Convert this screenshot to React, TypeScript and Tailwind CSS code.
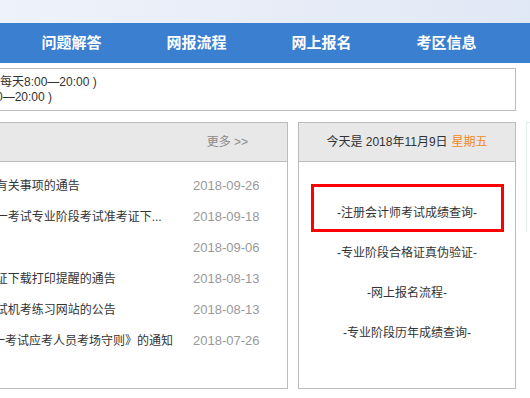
import React from 'react'

const navItems = ['首页', '问题解答', '网报流程', '网上报名', '考区信息', '联系我们']

const notices = [
  { title: '关于2018年注会考试报名工作有关事项的通告', date: '2018-09-26' },
  { title: '关于2018年注册会计师全国统一考试专业阶段考试准考证下...', date: '2018-09-18' },
  { title: '2018年考试报名简章', date: '2018-09-06' },
  { title: '关于2018年全国统一考试准考证下载打印提醒的通告', date: '2018-08-13' },
  { title: '关于开通2018年注册会计师考试机考练习网站的公告', date: '2018-08-13' },
  { title: '关于印发《注册会计师全国统一考试应考人员考场守则》的通知', date: '2018-07-26' },
]

const quickLinks = [
  '-注册会计师考试成绩查询-',
  '-专业阶段合格证真伪验证-',
  '-网上报名流程-',
  '-专业阶段历年成绩查询-',
]

export default function App() {
  return (
    <div
      className="w-[530px] h-[398px] overflow-hidden bg-white text-[12px] text-[#333]"
      style={{ fontFamily: '"Liberation Sans", "Noto Sans CJK SC", sans-serif' }}
    >
      {/* top band */}
      <div className="h-[23px] bg-gradient-to-r from-[#eef2fa] to-[#e1e8f5]" />

      {/* nav */}
      <div className="h-[40px] bg-[#3b80d0] overflow-hidden">
        <div className="flex h-full -ml-[116px]">
          {navItems.map((item) => (
            <div
              key={item}
              className="w-[125px] shrink-0 flex items-center justify-center text-white font-bold text-[15px]"
            >
              {item}
            </div>
          ))}
        </div>
      </div>

      {/* notice box */}
      <div className="mt-[5px] -ml-[130px] w-[646px] h-[43px] border border-[#bcbcbc] pl-[9px] pt-[6px] leading-[15px] whitespace-nowrap">
        <div>（报名期间咨询时间：每天8:00—20:00 )</div>
        <div>（其他时间：周一 9:00—20:00 )</div>
      </div>

      {/* panels */}
      <div className="mt-[11px] flex h-[267px]">
        {/* news list */}
        <div className="-ml-[175px] w-[463px] shrink-0 border border-[#bcbcbc] flex flex-col">
          <div className="h-[39px] bg-[#e8e8e8] border-b border-[#bcbcbc] flex items-center justify-between pl-[11px] pr-[39px]">
            <span className="text-[14px] font-bold text-[#333]">通知公告</span>
            <span className="text-[#888] text-[12px]">更多 &gt;&gt;</span>
          </div>
          <div className="pt-2">
            {notices.map((n) => (
              <div key={n.date + n.title} className="h-[31px] flex items-center">
                <div className="flex-1 min-w-0 pl-[11px] whitespace-nowrap overflow-hidden">{n.title}</div>
                <div className="w-[94px] shrink-0 text-[13px] text-[#999]">{n.date}</div>
              </div>
            ))}
          </div>
        </div>

        {/* quick links */}
        <div className="ml-[10px] w-[218px] shrink-0 border border-[#bcbcbc] relative">
          <div className="h-[39px] bg-[#e8e8e8] border-b border-[#bcbcbc] flex items-center justify-center whitespace-nowrap">
            今天是 2018年11月9日 <span className="ml-[4px] text-[#f08a1c]">星期五</span>
          </div>
          <div className="pt-[31px]">
            {quickLinks.map((l) => (
              <div key={l} className="h-[40px] flex items-center justify-center">
                {l}
              </div>
            ))}
          </div>
          <div className="absolute left-[12px] top-[61px] w-[193px] h-[48px] border-[3px] border-[#ff0000]" />
        </div>

        <div className="ml-[10px] w-[200px] h-[110px] shrink-0 border-l border-t border-[#e2eeee]" />
      </div>
    </div>
  )
}
